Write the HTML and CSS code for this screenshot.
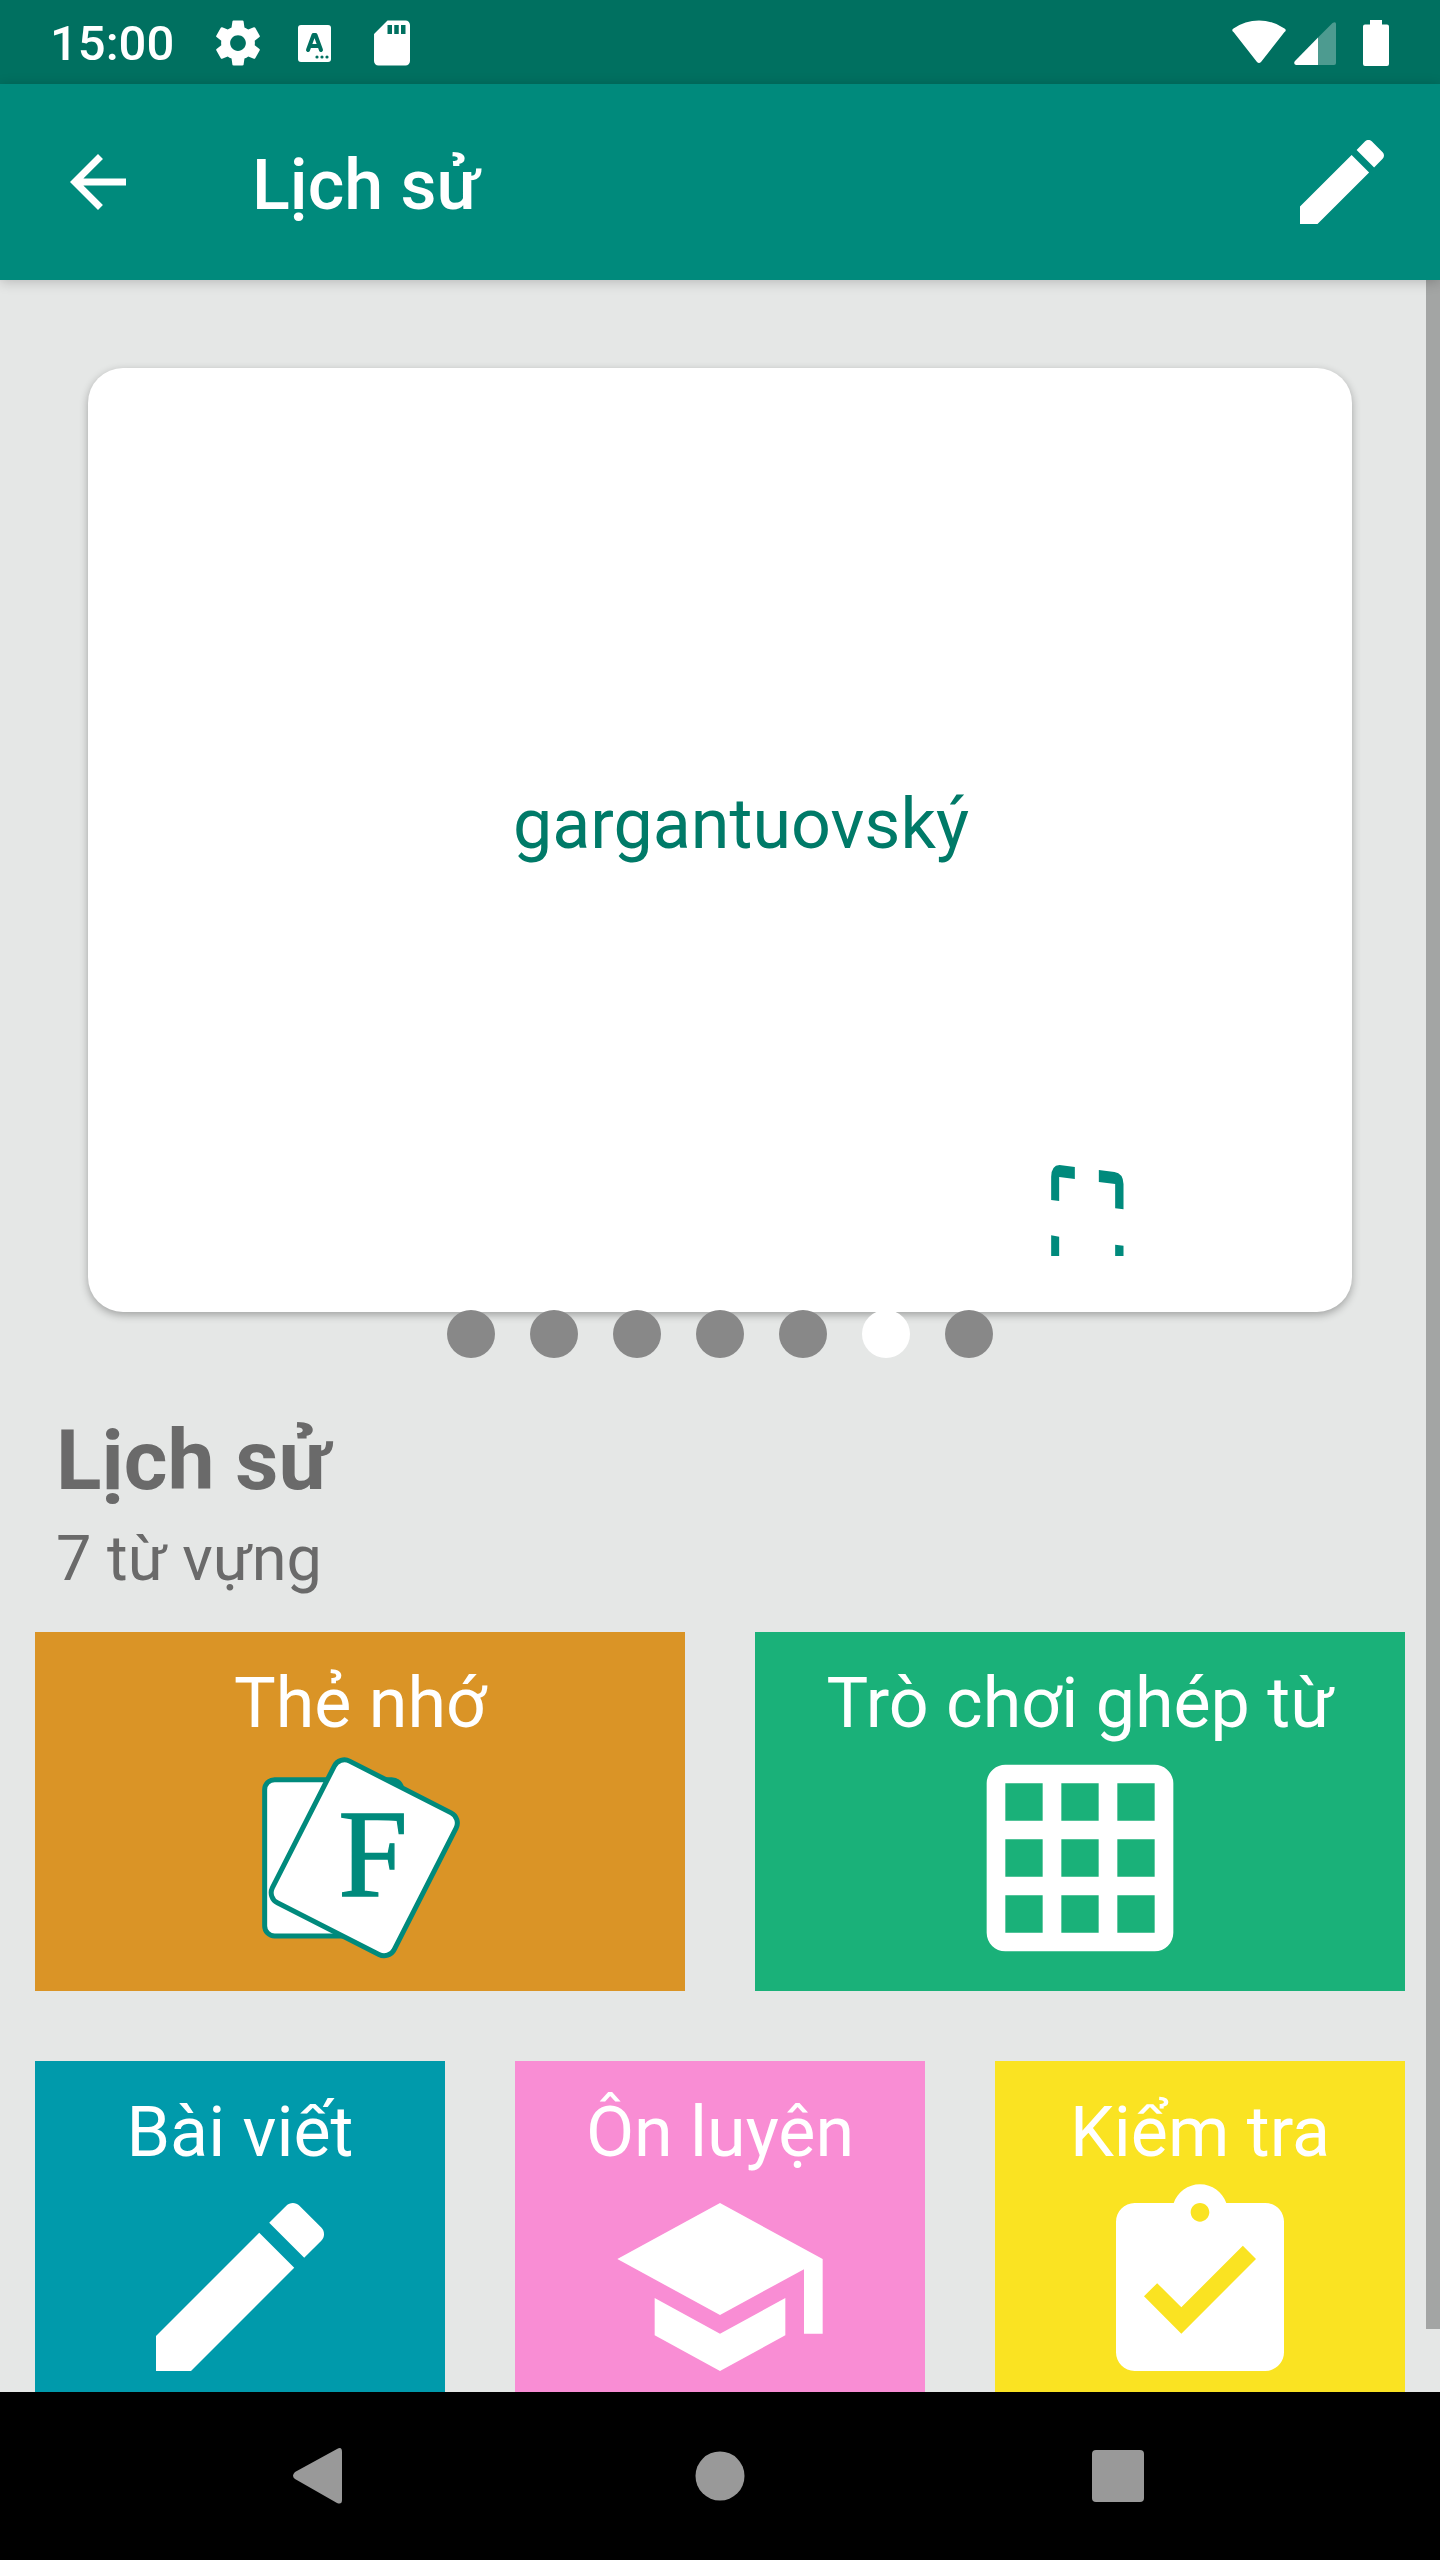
FILE: index.html
```html
<!DOCTYPE html>
<html lang="vi">
<head>
<meta charset="utf-8">
<meta name="viewport" content="width=device-width, initial-scale=1">
<title>Lịch sử</title>
<link rel="stylesheet" href="styles.css">
</head>
<body>
<div class="app">
  <div class="status">
    <span class="clock">15:00</span>
    <div class="notices">
      <svg class="notice" viewBox="0 0 24 24" aria-hidden="true"><path d="M19.43 12.98c.04-.32.07-.64.07-.98s-.03-.66-.07-.98l2.11-1.65c.19-.15.24-.42.12-.64l-2-3.46c-.12-.22-.39-.3-.61-.22l-2.49 1c-.52-.4-1.08-.73-1.69-.98l-.38-2.65C14.46 2.18 14.25 2 14 2h-4c-.25 0-.46.18-.49.42l-.38 2.65c-.61.25-1.17.59-1.69.98l-2.49-1c-.23-.09-.49 0-.61.22l-2 3.46c-.13.22-.07.49.12.64l2.11 1.65c-.04.32-.07.65-.07.98s.03.66.07.98l-2.11 1.65c-.19.15-.24.42-.12.64l2 3.46c.12.22.39.3.61.22l2.49-1c.52.4 1.08.73 1.69.98l.38 2.65c.03.24.24.42.49.42h4c.25 0 .46-.18.49-.42l.38-2.65c.61-.25 1.17-.59 1.69-.98l2.49 1c.23.09.49 0 .61-.22l2-3.46c.12-.22.07-.49-.12-.64l-2.11-1.65zM12 15.500c-1.930 0-3.500-1.570-3.500-3.500s1.570-3.500 3.500-3.500 3.500 1.570 3.500 3.500-1.570 3.500-3.500 3.500z"/></svg>
      <svg class="notice" viewBox="0 0 54 54" aria-hidden="true"><rect x="10" y="9" width="33" height="37" rx="3"/><path class="cut-line" d="M20 34l5.500-15h2l5.500 15M22 30h9"/><g class="cut"><circle cx="29" cy="41" r="1.600"/><circle cx="34" cy="41" r="1.600"/><circle cx="39" cy="41" r="1.600"/></g></svg>
      <svg class="notice" viewBox="0 0 24 24" aria-hidden="true"><path d="M18 2h-8L4.020 8 4 20c0 1.100.9 2 2 2h12c1.100 0 2-.9 2-2V4c0-1.100-.9-2-2-2zm-6 6h-2V4h2v4zm3 0h-2V4h2v4zm3 0h-2V4h2v4z"/></svg>
    </div>
    <div class="signals">
      <svg width="54" height="46" viewBox="0 0 54 46" aria-hidden="true"><path d="M1.500 12Q-1 10 1.500 8.500Q13 .5 27 .5T52.500 8.500Q55 10 52.500 12L29 42Q27 44 25 42Z"/></svg>
      <svg width="42" height="46" viewBox="0 0 42 46" aria-hidden="true"><path d="M24 17.500V45H2Q-1 44 1 41Z"/><path class="faint" d="M24 17.500L38.500 3Q42 1 42 4V43Q42 45 40 45H24Z"/></svg>
      <svg class="battery" width="26" height="46" viewBox="0 0 26 46" aria-hidden="true"><path d="M7 0H19V4.500H24Q26 4.500 26 6.500V44Q26 46 24 46H2Q0 46 0 44V6.500Q0 4.500 2 4.500H7Z"/></svg>
    </div>
  </div>

  <header class="bar">
    <button class="icon-btn" type="button" aria-label="Quay lại"><svg class="back" viewBox="0 0 24 24"><path d="M20 11H7.830l5.590-5.590L12 4l-8 8 8 8 1.410-1.410L7.830 13H20v-2z"/></svg></button>
    <h1 class="title">Lịch sử</h1>
    <button class="icon-btn" type="button" aria-label="Sửa"><svg class="edit" viewBox="0 0 24 24"><path d="M3 17.250V21h3.750L17.810 9.940l-3.750-3.750L3 17.250zM20.710 7.040c.39-.39.39-1.020 0-1.410l-2.340-2.340c-.39-.39-1.020-.39-1.410 0l-1.830 1.830 3.750 3.750 1.830-1.830z"/></svg></button>
  </header>

  <main class="content">
    <section class="card">
      <p class="word">gargantuovský</p>
      <button class="icon-btn expand" type="button" aria-label="Toàn màn hình"><svg width="73" height="91" viewBox="95 105 218 273"><path d="M95 210V140Q96 106 120 105L166 111V147L119 141V213ZM238 120L285 126Q311 130 312 162V238L287 235V162L238 156ZM95 316L119 320V378H95ZM287 344L312 347V378H287Z"/></svg></button>
    </section>
    <div class="dots">
      <i class="dot"></i><i class="dot"></i><i class="dot"></i><i class="dot"></i><i class="dot"></i><i class="dot current"></i><i class="dot"></i>
    </div>

    <section class="summary">
      <h2 class="name">Lịch sử</h2>
      <p class="count">7 từ vựng</p>
    </section>

    <div class="tiles two">
      <button class="tile orange" type="button"><span>Thẻ nhớ</span>
        <svg class="art" viewBox="144 318 672 672" aria-hidden="true"><g class="sheet"><rect x="194" y="419" width="411" height="469" rx="30"/><rect x="288" y="415" width="410" height="477" rx="34" transform="rotate(27 493 653)"/></g><text class="letter" x="415" y="768">F</text></svg>
      </button>
      <button class="tile green" type="button"><span>Trò chơi ghép từ</span>
        <svg class="art" viewBox="0 0 24 24" aria-hidden="true"><path d="M20 2H4c-1.100 0-2 .9-2 2v16c0 1.100.9 2 2 2h16c1.100 0 2-.9 2-2V4c0-1.100-.9-2-2-2zM8 20H4v-4h4v4zm0-6H4v-4h4v4zm0-6H4V4h4v4zm6 12h-4v-4h4v4zm0-6h-4v-4h4v4zm0-6h-4V4h4v4zm6 12h-4v-4h4v4zm0-6h-4v-4h4v4zm0-6h-4V4h4v4z"/></svg>
      </button>
    </div>
    <div class="tiles three">
      <button class="tile teal" type="button"><span>Bài viết</span>
        <svg class="art" viewBox="0 0 24 24" aria-hidden="true"><path d="M3 17.250V21h3.750L17.810 9.940l-3.750-3.750L3 17.250zM20.710 7.040c.39-.39.39-1.020 0-1.410l-2.340-2.340c-.39-.39-1.020-.39-1.410 0l-1.830 1.830 3.750 3.750 1.830-1.830z"/></svg>
      </button>
      <button class="tile pink" type="button"><span>Ôn luyện</span>
        <svg class="art" viewBox="0 0 24 24" aria-hidden="true"><path d="M5 13.180v4L12 21l7-3.820v-4L12 17l-7-3.820zM12 3L1 9l11 6 9-4.910V17h2V9L12 3z"/></svg>
      </button>
      <button class="tile yellow" type="button"><span>Kiểm tra</span>
        <svg class="art" viewBox="0 0 24 24" aria-hidden="true"><path d="M19 3h-4.180C14.400 1.840 13.300 1 12 1c-1.300 0-2.400.84-2.820 2H5c-1.100 0-2 .9-2 2v14c0 1.100.9 2 2 2h14c1.100 0 2-.9 2-2V5c0-1.100-.9-2-2-2zm-7 0c.55 0 1 .45 1 1s-.45 1-1 1-1-.45-1-1 .45-1 1-1zm-2 14l-4-4 1.410-1.410L10 14.170l6.590-6.590L18 9l-8 8z"/></svg>
      </button>
    </div>
    <div class="thumb"></div>
  </main>

  <nav class="nav">
    <button class="icon-btn" type="button" aria-label="Trở về"><svg class="key" viewBox="0 0 84 84"><path d="M17 45Q13 42 17 38L59 15Q64 12 64 18V66Q64 71 59 69Z"/></svg></button>
    <button class="icon-btn" type="button" aria-label="Màn hình chính"><svg class="key" viewBox="0 0 84 84"><circle cx="42" cy="42" r="24.500"/></svg></button>
    <button class="icon-btn" type="button" aria-label="Gần đây"><svg class="key" viewBox="0 0 84 84"><rect x="14" y="16" width="52" height="52" rx="4"/></svg></button>
  </nav>
</div>
</body>
</html>
```
FILE: styles.css
```css
* {
  box-sizing: border-box;
}

body {
  margin: 0;
  font-family: Roboto, "Noto Sans", sans-serif;
  background: #e5e7e6;
}

h1, h2, p {
  margin: 0;
}

button {
  border: 0;
  border-radius: 0;
  font: inherit;
  color: inherit;
}

svg {
  display: block;
  fill: currentColor;
}

.app {
  display: flex;
  flex-direction: column;
  height: 100vh;
  color: #fff;
}

/* System status bar */
.status {
  display: flex;
  align-items: center;
  flex: none;
  height: 84px;
  padding: 2px 51px 0 50px;
  background: #007060;
}

.clock {
  font-size: 49px;
  font-weight: 500;
}

.notices {
  display: flex;
  gap: 23px;
  margin-left: 37px;
}

.notice {
  width: 54px;
  height: 54px;
}

.cut {
  fill: #007060;
}

.cut-line {
  fill: none;
  stroke: #007060;
  stroke-width: 4;
  stroke-linejoin: round;
  stroke-linecap: round;
}

.signals {
  display: flex;
  gap: 8px;
  margin-left: auto;
}

.battery {
  margin-left: 19px;
}

.faint {
  opacity: 0.3;
}

/* App bar */
.bar {
  display: flex;
  align-items: center;
  flex: none;
  height: 196px;
  padding: 0 42px 0 56px;
  background: #008a7c;
  box-shadow: 0 2px 12px rgba(0, 0, 0, 0.2);
  position: relative;
  z-index: 1;
}

.icon-btn {
  flex: none;
  padding: 0;
  background: none;
}

.back {
  width: 84px;
  height: 84px;
}

.edit {
  width: 112px;
  height: 112px;
}

.title {
  flex: 1;
  margin-left: 112px;
  padding-top: 6px;
  font-size: 70px;
  font-weight: 500;
}

/* Scrolling content */
.content {
  position: relative;
  flex: 1;
  min-height: 0;
  overflow: hidden;
  padding: 88px 35px 0;
  background: #e5e7e6;
}

.card {
  display: grid;
  height: 944px;
  margin: 0 53px;
  border-radius: 35px;
  background: #fff;
  box-shadow: 0 3px 8px rgba(0, 0, 0, 0.3);
}

.word {
  grid-area: 1 / 1;
  place-self: center;
  padding: 0 0 32px 42px;
  font-size: 70px;
  color: #007a68;
}

.expand {
  grid-area: 1 / 1;
  place-self: end;
  margin: 0 228px 56px 0;
  color: #008a7c;
}

.dots {
  display: flex;
  justify-content: center;
  gap: 35px;
  margin-top: -2px;
  position: relative;
}

.dot {
  width: 48px;
  height: 48px;
  border-radius: 50%;
  background: #888;
}

.dot.current {
  background: #fff;
}

.summary {
  padding: 47px 21px 31px;
  color: #6a6a6a;
}

.name {
  font-size: 84px;
  line-height: 112px;
}

.count {
  font-size: 63px;
  line-height: 84px;
}

.tiles {
  display: grid;
  gap: 70px;
  margin-bottom: 70px;
}

.two {
  grid-template-columns: repeat(2, 1fr);
}

.three {
  grid-template-columns: repeat(3, 1fr);
}

.tile {
  display: flex;
  flex-direction: column;
  align-items: center;
  padding: 28px 0 21px;
  font-size: 70px;
  line-height: 86px;
}

.art {
  width: 224px;
  height: 224px;
}

.orange { background: #da9426; }
.green { background: #1ab179; }
.teal { background: #009aab; }
.pink { background: #f98dd4; }
.yellow { background: #fae322; }

.sheet {
  fill: #fff;
  stroke: #008a7c;
  stroke-width: 15;
}

.letter {
  fill: #008a7c;
  stroke: #008a7c;
  stroke-width: 4;
  font-family: "Liberation Serif", serif;
  font-size: 375px;
}

.thumb {
  position: absolute;
  top: 0;
  right: 0;
  width: 14px;
  height: 97%;
  background: #a3a5a4;
}

/* System navigation */
.nav {
  display: flex;
  align-items: center;
  justify-content: center;
  gap: 316px;
  flex: none;
  height: 168px;
  background: #000;
  color: #999;
}

.key {
  width: 84px;
  height: 84px;
}
```
